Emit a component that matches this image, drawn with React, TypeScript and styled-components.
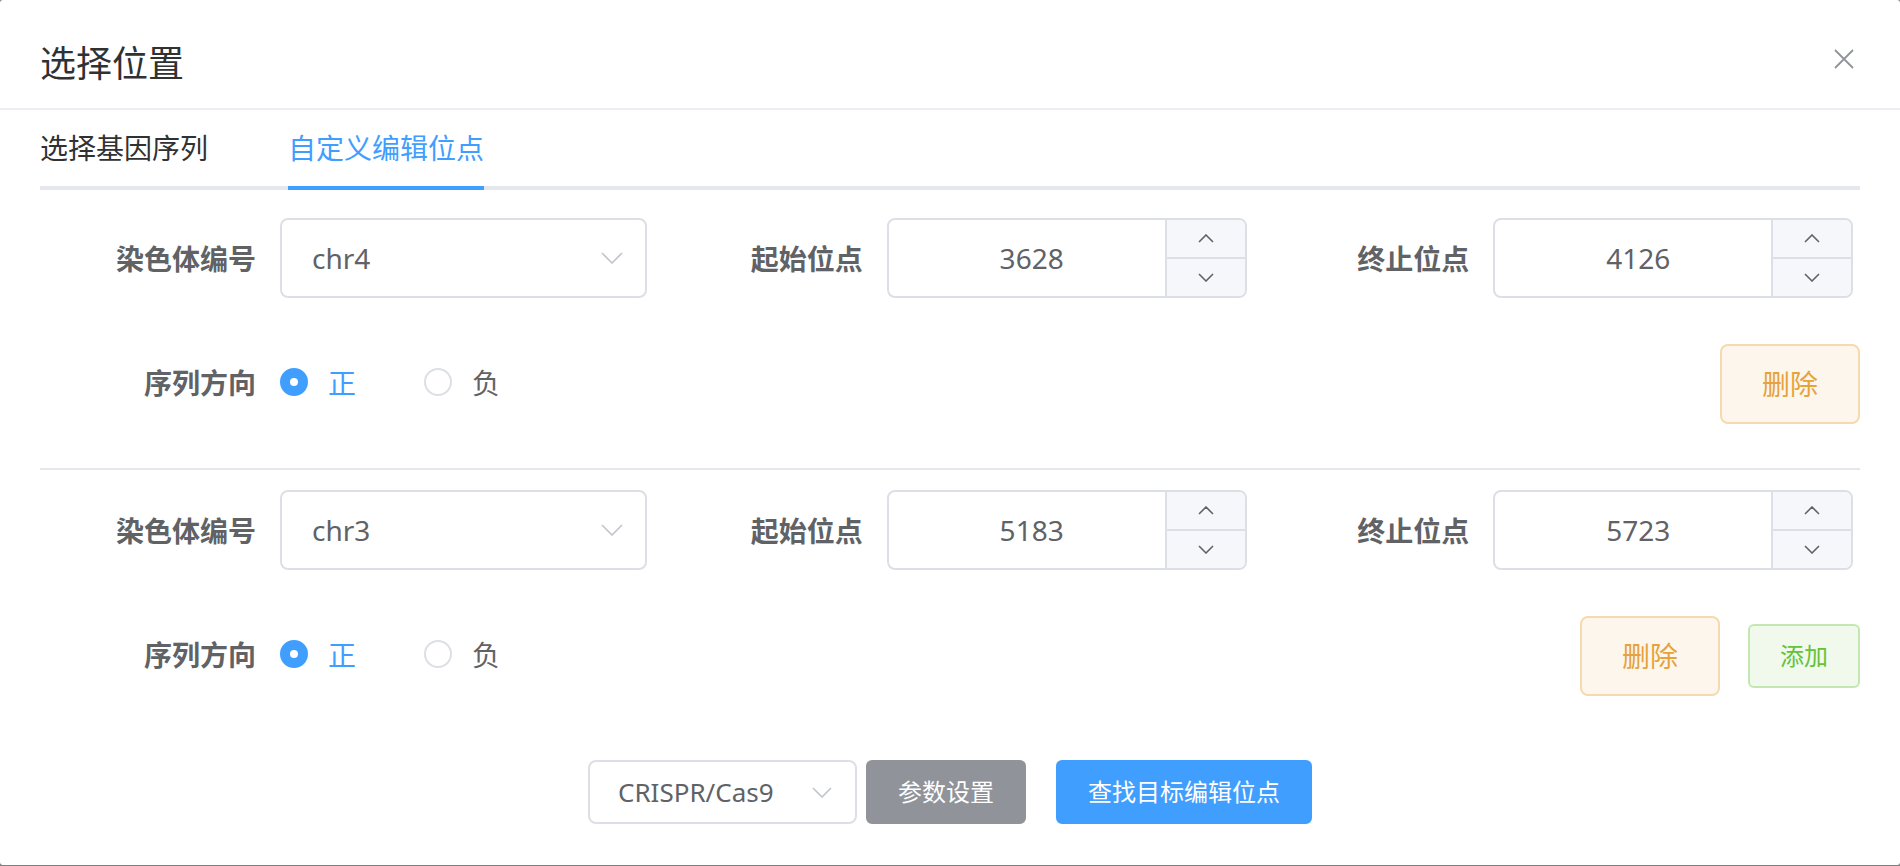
import React from 'react';
import styled, { createGlobalStyle } from 'styled-components';

const GlobalStyle = createGlobalStyle`
  html, body {
    margin: 0;
    padding: 0;
    background: #808080;
  }
  body {
    font-family: "Noto Sans", "Noto Sans CJK SC", sans-serif;
    color: #606266;
  }
  * {
    box-sizing: border-box;
  }
`;

const Dialog = styled.div`
  width: 1900px;
  height: 865px;
  background: #fff;
  border-radius: 3px;
  display: flex;
  flex-direction: column;
`;

const Header = styled.div`
  display: flex;
  justify-content: space-between;
  align-items: flex-start;
  padding: 40px 40px 20px;
  border-bottom: 2px solid #ebeef5;
`;

const Title = styled.span`
  font-size: 36px;
  line-height: 48px;
  color: #303133;
`;

const CloseButton = styled.button`
  border: none;
  background: none;
  padding: 0;
  margin: 9px 6px 0 0;
  width: 20px;
  height: 20px;
  display: flex;
  cursor: pointer;
`;

const Body = styled.div`
  padding: 0 40px;
`;

const TabNav = styled.div`
  display: flex;
  border-bottom: 4px solid #e4e7ed;
  margin-bottom: 28px;
`;

const TabItem = styled.div`
  height: 80px;
  margin-bottom: -4px;
  padding: 0 40px;
  &:first-child {
    padding-left: 0;
  }
  &:last-child {
    padding-right: 0;
  }
`;

const TabLabel = styled.span<{ $active?: boolean }>`
  display: inline-block;
  height: 80px;
  line-height: 76px;
  font-size: 28px;
  color: ${(p) => (p.$active ? '#409eff' : '#303133')};
  border-bottom: 4px solid ${(p) => (p.$active ? '#409eff' : 'transparent')};
`;

const FieldRow = styled.div`
  display: grid;
  grid-template-columns: repeat(3, 1fr);
  height: 80px;
  margin-bottom: 44px;
`;

const FormItem = styled.div`
  display: flex;
  align-items: center;
`;

const Label = styled.label`
  width: 240px;
  flex: none;
  padding-right: 24px;
  text-align: right;
  font-size: 28px;
  font-weight: 700;
  color: #606266;
`;

const SelectBox = styled.div<{ $small?: boolean }>`
  display: flex;
  align-items: center;
  justify-content: space-between;
  flex: ${(p) => (p.$small ? 'none' : '1')};
  width: ${(p) => (p.$small ? '269px' : 'auto')};
  height: ${(p) => (p.$small ? '64px' : '80px')};
  border: 2px solid #dcdfe6;
  border-radius: 8px;
  padding-left: ${(p) => (p.$small ? '28px' : '30px')};
  padding-right: ${(p) => (p.$small ? '23px' : '22px')};
  font-size: ${(p) => (p.$small ? '26px' : '28px')};
  color: #606266;
  background: #fff;
`;

const NumberBox = styled.div`
  display: flex;
  width: 360px;
  height: 80px;
  border: 2px solid #dcdfe6;
  border-radius: 8px;
  overflow: hidden;
`;

const NumberValue = styled.div`
  flex: 1;
  display: flex;
  align-items: center;
  justify-content: center;
  padding-left: 30px;
  padding-right: 20px;
  font-size: 28px;
  color: #606266;
`;

const Stepper = styled.div`
  width: 80px;
  display: flex;
  flex-direction: column;
  border-left: 2px solid #dcdfe6;
  background: #f5f7fa;
`;

const StepButton = styled.div`
  flex: 1;
  display: flex;
  align-items: center;
  justify-content: center;
  & + & {
    border-top: 2px solid #dcdfe6;
  }
`;

const OptionRow = styled.div`
  display: flex;
  align-items: center;
  justify-content: space-between;
  height: 80px;
`;

const RadioGroup = styled.div`
  display: flex;
  align-items: center;
`;

const Radio = styled.label<{ $checked?: boolean }>`
  display: flex;
  align-items: center;
  margin-right: 68px;
  font-size: 28px;
  color: ${(p) => (p.$checked ? '#409eff' : '#606266')};
`;

const RadioCircle = styled.span<{ $checked?: boolean }>`
  width: 28px;
  height: 28px;
  border-radius: 50%;
  border: 2px solid ${(p) => (p.$checked ? '#409eff' : '#dcdfe6')};
  background: ${(p) => (p.$checked ? '#409eff' : '#fff')};
  display: flex;
  align-items: center;
  justify-content: center;
  margin-right: 20px;
  &::after {
    content: '';
    width: 8px;
    height: 8px;
    border-radius: 50%;
    background: #fff;
    display: ${(p) => (p.$checked ? 'block' : 'none')};
  }
`;

const Actions = styled.div`
  display: flex;
  align-items: center;
  gap: 28px;
  margin-top: 4px;
`;

const tones = {
  warning: { bg: '#fdf6ec', border: '#f5dab1', color: '#e6a23c' },
  success: { bg: '#f0f9eb', border: '#c2e7b0', color: '#67c23a' },
  info: { bg: '#909399', border: '#909399', color: '#fff' },
  primary: { bg: '#409eff', border: '#409eff', color: '#fff' },
};

type Tone = keyof typeof tones;

const Button = styled.button<{ $tone: Tone; $small?: boolean }>`
  height: ${(p) => (p.$small ? '64px' : '80px')};
  padding: 0 ${(p) => (p.$small ? '30px' : '40px')};
  border: 2px solid ${(p) => tones[p.$tone].border};
  border-radius: ${(p) => (p.$small ? '6px' : '8px')};
  background: ${(p) => tones[p.$tone].bg};
  color: ${(p) => tones[p.$tone].color};
  font-family: inherit;
  font-size: ${(p) => (p.$small ? '24px' : '28px')};
  line-height: 1;
  cursor: pointer;
`;

const Divider = styled.div`
  height: 2px;
  background: #e4e7ed;
  margin: 46px 0 20px;
`;

const Footer = styled.div`
  display: flex;
  align-items: center;
  justify-content: center;
  margin-top: 66px;
`;

const FooterGroup = styled.div`
  display: flex;
  align-items: center;
  gap: 9px;
  margin-right: 30px;
`;

const Chevron = ({ up, w = 16, color = '#606266' }: { up?: boolean; w?: number; color?: string }) => (
  <svg width={w} height={w / 2 + 1} viewBox={`0 0 ${w} ${w / 2 + 1}`} fill="none">
    <path
      d={up ? `M1 ${w / 2} L${w / 2} 1 L${w - 1} ${w / 2}` : `M1 1 L${w / 2} ${w / 2} L${w - 1} 1`}
      stroke={color}
      strokeWidth="1.6"
    />
  </svg>
);

const NumberInput = ({ value }: { value: number }) => (
  <NumberBox>
    <NumberValue>{value}</NumberValue>
    <Stepper>
      <StepButton>
        <Chevron up />
      </StepButton>
      <StepButton>
        <Chevron />
      </StepButton>
    </Stepper>
  </NumberBox>
);

type Site = { chr: string; start: number; end: number; last?: boolean };

const SiteBlock = ({ chr, start, end, last }: Site) => (
  <>
    <FieldRow>
      <FormItem>
        <Label>染色体编号</Label>
        <SelectBox>
          <span>{chr}</span>
          <Chevron w={22} color="#c0c4cc" />
        </SelectBox>
      </FormItem>
      <FormItem>
        <Label>起始位点</Label>
        <NumberInput value={start} />
      </FormItem>
      <FormItem>
        <Label>终止位点</Label>
        <NumberInput value={end} />
      </FormItem>
    </FieldRow>
    <OptionRow>
      <FormItem>
        <Label>序列方向</Label>
        <RadioGroup>
          <Radio $checked>
            <RadioCircle $checked />正
          </Radio>
          <Radio>
            <RadioCircle />负
          </Radio>
        </RadioGroup>
      </FormItem>
      <Actions>
        <Button $tone="warning">删除</Button>
        {last && (
          <Button $tone="success" $small>
            添加
          </Button>
        )}
      </Actions>
    </OptionRow>
  </>
);

const sites: Site[] = [
  { chr: 'chr4', start: 3628, end: 4126 },
  { chr: 'chr3', start: 5183, end: 5723, last: true },
];

export default function App() {
  return (
    <>
      <GlobalStyle />
      <Dialog>
        <Header>
          <Title>选择位置</Title>
          <CloseButton aria-label="close">
            <svg width="20" height="20" viewBox="0 0 20 20" fill="none">
              <path d="M1 1 L19 19 M19 1 L1 19" stroke="#909399" strokeWidth="1.8" />
            </svg>
          </CloseButton>
        </Header>
        <Body>
          <TabNav>
            <TabItem>
              <TabLabel>选择基因序列</TabLabel>
            </TabItem>
            <TabItem>
              <TabLabel $active>自定义编辑位点</TabLabel>
            </TabItem>
          </TabNav>
          {sites.map((site, i) => (
            <React.Fragment key={site.chr}>
              {i > 0 && <Divider />}
              <SiteBlock {...site} />
            </React.Fragment>
          ))}
          <Footer>
            <FooterGroup>
              <SelectBox $small>
                <span>CRISPR/Cas9</span>
                <Chevron w={20} color="#c0c4cc" />
              </SelectBox>
              <Button $tone="info" $small>
                参数设置
              </Button>
            </FooterGroup>
            <Button $tone="primary" $small>
              查找目标编辑位点
            </Button>
          </Footer>
        </Body>
      </Dialog>
    </>
  );
}
